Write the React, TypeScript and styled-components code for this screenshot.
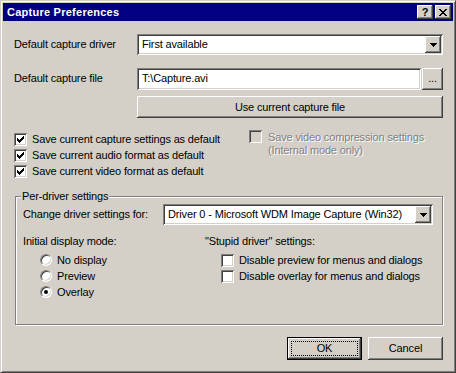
import styled, { createGlobalStyle } from 'styled-components';

const GlobalStyle = createGlobalStyle`
  html, body { margin: 0; padding: 0; background: #d4d0c8; }
`;

const FACE = '#d4d0c8';

function CheckMark() {
  // classic 7x7 pixel check, drawn as 3px tall columns
  const starts = [2, 3, 4, 3, 2, 1, 0];
  const d = starts.map((y, i) => `M${3 + i} ${3 + y}h1v3h-1z`).join('');
  return (
    <svg width="13" height="13" viewBox="0 0 13 13" shapeRendering="crispEdges">
      <path d={d} fill="#000" />
    </svg>
  );
}

function Arrow() {
  return (
    <svg width="7" height="4" viewBox="0 0 7 4" shapeRendering="crispEdges">
      <path d="M0 0h7v1h-1v1h-1v1h-1v1h-1v-1h-1v-1h-1v-1h-1z" fill="#000" />
    </svg>
  );
}

function CloseGlyph() {
  return (
    <svg width="8" height="7" viewBox="0 0 8 7" shapeRendering="crispEdges">
      <path
        d="M0 0h2v1h1v1h2v-1h1v-1h2v1h-1v1h-1v1h-1v1h1v1h1v1h1v1h-2v-1h-1v-1h-2v1h-1v1h-2v-1h1v-1h1v-1h1v-1h-1v-1h-1v-1h-1z"
        fill="#000"
      />
    </svg>
  );
}

function Checkbox({ checked, disabled }: { checked?: boolean; disabled?: boolean }) {
  return <Box $disabled={disabled}>{checked && <CheckMark />}</Box>;
}

function Combo({ value, width }: { value: string; width: number }) {
  return (
    <ComboBox style={{ width }}>
      <ComboText>{value}</ComboText>
      <ComboButton>
        <Arrow />
      </ComboButton>
    </ComboBox>
  );
}

function Radio({ label, checked }: { label: string; checked?: boolean }) {
  return (
    <RadioRow>
      <RadioCircle>{checked && <RadioDot />}</RadioCircle>
      <span>{label}</span>
    </RadioRow>
  );
}

export default function App() {
  return (
    <>
      <GlobalStyle />
      <Win>
        <TitleBar>
          <TitleText>Capture Preferences</TitleText>
          <TitleButtons>
            <TitleButton>?</TitleButton>
            <TitleButton>
              <CloseGlyph />
            </TitleButton>
          </TitleButtons>
        </TitleBar>

        <Body>
          <FieldRow>
            <Label>Default capture driver</Label>
            <Combo value="First available" width={306} />
          </FieldRow>

          <FieldRow $gap={13} $top>
            <Label $pad={4}>Default capture file</Label>
            <TextField>T:\Capture.avi</TextField>
            <SmallButton>...</SmallButton>
          </FieldRow>

          <FieldRow $gap={6}>
            <Label />
            <WideButton>Use current capture file</WideButton>
          </FieldRow>

          <ChecksSection>
            <CheckColumn>
              <CheckRow>
                <Checkbox checked />
                <span>Save current capture settings as default</span>
              </CheckRow>
              <CheckRow>
                <Checkbox checked />
                <span>Save current audio format as default</span>
              </CheckRow>
              <CheckRow>
                <Checkbox checked />
                <span>Save current video format as default</span>
              </CheckRow>
            </CheckColumn>
            <DisabledCheck>
              <Checkbox disabled />
              <DisabledText>
                Save video compression settings
                <br />
                (Internal mode only)
              </DisabledText>
            </DisabledCheck>
          </ChecksSection>

          <Group>
            <Legend>Per-driver settings</Legend>
            <GroupRow>
              <GroupLabel>Change driver settings for:</GroupLabel>
              <Combo value="Driver 0 - Microsoft WDM Image Capture (Win32)" width={270} />
            </GroupRow>
            <GroupColumns>
              <ModeColumn>
                <Caption>Initial display mode:</Caption>
                <OptionList $indent={17}>
                  <Radio label="No display" />
                  <Radio label="Preview" />
                  <Radio label="Overlay" checked />
                </OptionList>
              </ModeColumn>
              <div>
                <Caption>"Stupid driver" settings:</Caption>
                <OptionList $indent={16}>
                  <CheckRow>
                    <Checkbox />
                    <span>Disable preview for menus and dialogs</span>
                  </CheckRow>
                  <CheckRow>
                    <Checkbox />
                    <span>Disable overlay for menus and dialogs</span>
                  </CheckRow>
                </OptionList>
              </div>
            </GroupColumns>
          </Group>

          <Footer>
            <PushButton $default>OK</PushButton>
            <PushButton>Cancel</PushButton>
          </Footer>
        </Body>
      </Win>
    </>
  );
}

const raised = `
  box-shadow: inset -1px -1px #404040, inset 1px 1px #ffffff,
    inset -2px -2px #808080, inset 2px 2px ${FACE};
`;

const sunken = `
  box-shadow: inset 1px 1px #808080, inset -1px -1px #ffffff,
    inset 2px 2px #404040, inset -2px -2px ${FACE};
`;

const Win = styled.div`
  width: 456px;
  height: 373px;
  box-sizing: border-box;
  background: ${FACE};
  border: 1px solid;
  border-color: ${FACE} #404040 #404040 ${FACE};
  box-shadow: inset 1px 1px #ffffff, inset -1px -1px #808080;
  padding: 2px;
  display: flex;
  flex-direction: column;
  font-family: 'Liberation Sans', Arial, sans-serif;
  font-size: 11px;
  line-height: 13px;
  letter-spacing: -0.15px;
  color: #000;
`;

const TitleBar = styled.div`
  height: 18px;
  flex-shrink: 0;
  background: #000080;
  display: flex;
  align-items: center;
  padding: 0 2px;
`;

const TitleText = styled.span`
  color: #fff;
  font-weight: 700;
  font-size: 11px;
  letter-spacing: 0.25px;
  padding-left: 2px;
`;

const TitleButtons = styled.div`
  margin-left: auto;
  display: flex;
  gap: 2px;
`;

const TitleButton = styled.div`
  width: 16px;
  height: 14px;
  background: ${FACE};
  ${raised}
  display: flex;
  align-items: center;
  justify-content: center;
  font-weight: 700;
  font-size: 11px;
  line-height: 14px;
`;

const Body = styled.div`
  flex: 1;
  display: flex;
  flex-direction: column;
  padding: 13px 10px 0 11px;
`;

const FieldRow = styled.div<{ $gap?: number; $top?: boolean }>`
  display: flex;
  align-items: ${(p) => (p.$top ? 'flex-start' : 'center')};
  margin-top: ${(p) => p.$gap ?? 0}px;
`;

const Label = styled.span<{ $pad?: number }>`
  width: 123px;
  flex-shrink: 0;
  padding-top: ${(p) => p.$pad ?? 0}px;
`;

const ComboBox = styled.div`
  height: 21px;
  box-sizing: border-box;
  background: #fff;
  ${sunken}
  display: flex;
  align-items: center;
  padding: 2px;
`;

const ComboText = styled.span`
  flex: 1;
  padding-left: 3px;
  white-space: nowrap;
  overflow: hidden;
`;

const ComboButton = styled.div`
  width: 16px;
  height: 17px;
  background: ${FACE};
  ${raised}
  display: flex;
  align-items: center;
  justify-content: center;
`;

const TextField = styled.div`
  width: 284px;
  height: 22px;
  box-sizing: border-box;
  background: #fff;
  ${sunken}
  padding: 4px 0 0 5px;
`;

const SmallButton = styled.div`
  width: 21px;
  height: 22px;
  margin-left: 1px;
  box-sizing: border-box;
  background: ${FACE};
  ${raised}
  display: flex;
  align-items: center;
  justify-content: center;
  padding-bottom: 2px;
`;

const WideButton = styled.div`
  width: 306px;
  height: 22px;
  background: ${FACE};
  ${raised}
  display: flex;
  align-items: center;
  justify-content: center;
`;

const ChecksSection = styled.div`
  display: flex;
  margin-top: 13px;
`;

const CheckColumn = styled.div`
  width: 235px;
  display: flex;
  flex-direction: column;
`;

const CheckRow = styled.div`
  height: 16px;
  display: flex;
  align-items: center;
  gap: 5px;
`;

const Box = styled.div<{ $disabled?: boolean }>`
  width: 13px;
  height: 13px;
  flex-shrink: 0;
  background: ${(p) => (p.$disabled ? FACE : '#fff')};
  ${sunken}
`;

const DisabledCheck = styled.div`
  display: flex;
  align-items: flex-start;
  gap: 6px;
  margin-top: -1px;
`;

const DisabledText = styled.span`
  color: #808080;
  text-shadow: 1px 1px #ffffff;
  padding-top: 1px;
`;

const Group = styled.div`
  position: relative;
  margin-top: 17px;
  margin-left: 1px;
  width: 428px;
  height: 129px;
  box-sizing: border-box;
  border: 1px solid #808080;
  box-shadow: inset 1px 1px #ffffff, 1px 1px #ffffff;
  padding: 7px 0 0 7px;
`;

const Legend = styled.span`
  position: absolute;
  top: -7px;
  left: 5px;
  padding: 0 1px;
  background: ${FACE};
`;

const GroupRow = styled.div`
  display: flex;
  align-items: center;
`;

const GroupLabel = styled.span`
  width: 140px;
  flex-shrink: 0;
`;

const GroupColumns = styled.div`
  display: flex;
  margin-top: 10px;
`;

const ModeColumn = styled.div`
  width: 182px;
`;

const Caption = styled.div`
  height: 13px;
`;

const OptionList = styled.div<{ $indent: number }>`
  display: flex;
  flex-direction: column;
  margin-top: 4px;
  padding-left: ${(p) => p.$indent}px;
`;

const RadioRow = styled.div`
  height: 16px;
  display: flex;
  align-items: center;
  gap: 5px;
`;

const RadioCircle = styled.div`
  width: 12px;
  height: 12px;
  box-sizing: border-box;
  border-radius: 50%;
  background: #fff;
  border: 1px solid;
  border-color: #808080 #ffffff #ffffff #808080;
  box-shadow: inset 1px 1px #404040, inset -1px -1px ${FACE};
  display: flex;
  align-items: center;
  justify-content: center;
`;

const RadioDot = styled.div`
  width: 4px;
  height: 4px;
  border-radius: 50%;
  background: #000;
`;

const Footer = styled.div`
  display: flex;
  justify-content: flex-end;
  gap: 6px;
  margin-top: 12px;
`;

const PushButton = styled.div<{ $default?: boolean }>`
  position: relative;
  width: 75px;
  height: 23px;
  box-sizing: border-box;
  background: ${FACE};
  display: flex;
  align-items: center;
  justify-content: center;
  ${(p) =>
    p.$default
      ? `border: 1px solid #000;
         box-shadow: inset -1px -1px #404040, inset 1px 1px #ffffff, inset -2px -2px #808080;
         &::after {
           content: '';
           position: absolute;
           inset: 3px;
           border: 1px dotted #000;
         }`
      : raised}
`;
